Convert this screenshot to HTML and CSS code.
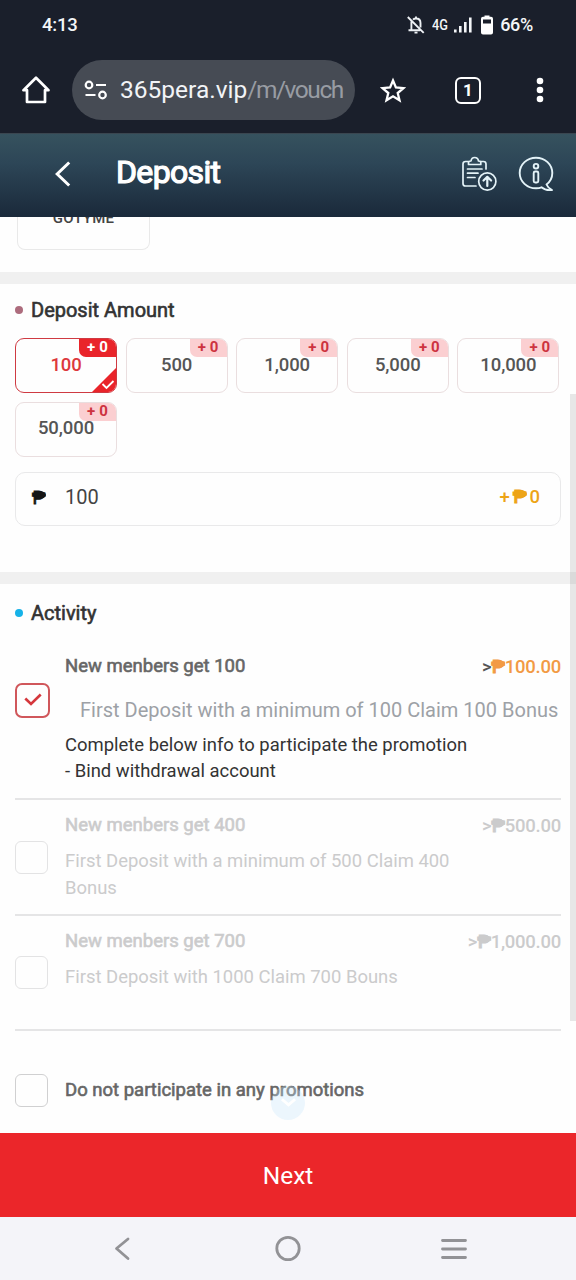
FILE: index.html
```html
<!DOCTYPE html>
<html lang="en">
<head>
<meta charset="utf-8">
<title>Deposit</title>
<link rel="stylesheet" href="styles.css">
</head>
<body>
<div class="phone">
  <div class="status">
    <span class="clock">4:13</span>
    <div class="status-right">
      <svg class="bell" viewBox="0 0 18 18" fill="none" stroke="#eef1f5" stroke-width="1.900"><path d="M4.400 5.500V13.500M1.500 14.200H13M6 3.600C6.800 2.800 7.700 2.500 9 2.500c2.800 0 4.500 1.900 4.500 4.500V11.500M9 .5V2.500M.8 1L16.700 16.900M7.500 16.600h3"/></svg>
      <span class="net">4G</span>
      <svg class="signal" viewBox="0 0 18 16" fill="#f4f6f8"><path d="M0 12.500h2.600V15.500H0zM5 9h2.600v6.500H5zM10 5h2.600v10.500H10zM15 .5h2.600v15H15z"/></svg>
      <svg class="battery" viewBox="0 0 12 20"><path d="M3.500 1.800V.5h5v1.300H10q2 0 2 2V17.500q0 2-2 2H2q-2 0-2-2V3.800q0-2 2-2z" fill="#fff"/><path d="M2 4.500h8v4H2z" fill="#1a1f2b"/></svg>
      <span class="pct">66%</span>
    </div>
  </div>
  <div class="browser">
    <svg class="home" viewBox="0 0 28 28" fill="none" stroke="#fff" stroke-width="2.700" stroke-linejoin="round"><path d="M1.500 14.200H5V26H23V14.200H26.500L14 1.800z"/></svg>
    <div class="url">
      <svg class="tune" viewBox="0 0 24 20" fill="none" stroke="#fff" stroke-width="2.200"><circle cx="5" cy="5" r="3.300"/><path d="M12 5h10M1.500 15h10"/><circle cx="18.500" cy="15" r="3.300"/></svg>
      <span class="address">365pera.vip<i>/m/vouch</i></span>
    </div>
    <svg class="star" viewBox="0 0 26 26" fill="none" stroke="#fff" stroke-width="2.300"><path d="M13 3.500l2.900 7 7.600.6-5.800 4.900 1.800 7.300L13 19.300 6.500 23.300l1.800-7.300-5.800-4.900 7.600-.6z"/></svg>
    <span class="tabs">1</span>
    <svg class="dots" viewBox="0 0 8 26" fill="#fff"><circle cx="4" cy="4" r="3.300"/><circle cx="4" cy="13" r="3.300"/><circle cx="4" cy="22" r="3.300"/></svg>
  </div>
  <header class="header">
    <svg class="back" viewBox="0 0 16 26" fill="none" stroke="#fff" stroke-width="3"><path d="M14.200 1.500L2.200 13 14.200 24.500"/></svg>
    <h1 class="page-title">Deposit</h1>
    <svg class="records" viewBox="0 0 36 36" fill="none" stroke="#e4f3f8" stroke-width="1.700" stroke-linecap="round" stroke-linejoin="round"><path d="M7.500 5.500H4.500Q2 5.500 2 8V27.500Q2 30 4.500 30H15M20 5.500H22.500Q25 5.500 25 8V13M7.500 8.500V6.500Q7.500 5 10 5Q10.500 1.500 13.700 1.500T17.500 5Q19.800 5 19.800 6.500V8.500zM6.500 13H21M6.500 17.200H17M6.500 21.500H14"/><circle cx="26.300" cy="25.500" r="8.600"/><path d="M26.300 30V21M22.500 24.500L26.300 20.800 30.100 24.500" stroke-width="2.200"/></svg>
    <svg class="info" viewBox="0 0 36 36" fill="none" stroke="#e4f3f8" stroke-width="1.900" stroke-linejoin="round"><path d="M28.500 28.500C32 25.800 34.300 21.500 34.300 17C34.300 8.500 27 1.700 18 1.700S1.700 8.500 1.700 17 9 32.300 18 32.300C20 32.300 22 32 23.500 31.300C26 33.500 30 34.500 34 34Q30 32 28.500 28.500z"/><circle cx="18" cy="10.200" r="2.300"/><rect x="15.700" y="15.500" width="4.600" height="11" rx="1.500"/></svg>
  </header>
  <main class="content">
    <section class="methods"><div class="method">GOTYME</div></section>
    <section class="amount">
      <h2 class="section-title plum">Deposit Amount</h2>
      <div class="chips">
        <div class="chip active">100<span class="bonus">+ 0</span><svg class="corner" viewBox="0 0 24 24"><path d="M24 0V24H0z" fill="#e9242a"/><path d="M10.500 16l4 4L21.500 13" fill="none" stroke="#fff" stroke-width="1.800"/></svg></div>
        <div class="chip">500<span class="bonus">+ 0</span></div>
        <div class="chip">1,000<span class="bonus">+ 0</span></div>
        <div class="chip">5,000<span class="bonus">+ 0</span></div>
        <div class="chip">10,000<span class="bonus">+ 0</span></div>
        <div class="chip low">50,000<span class="bonus">+ 0</span></div>
      </div>
      <div class="entry">
        <span class="peso dark">₱</span>
        <span class="value">100</span>
        <span class="gain"><span>+</span><span class="peso">₱</span><span>0</span></span>
      </div>
    </section>
    <section class="activity">
      <h2 class="section-title blue">Activity</h2>
      <div class="promo first">
        <span class="check on"><svg viewBox="0 0 18 14" fill="none" stroke="#d5373c" stroke-width="2.600"><path d="M1.300 5.500L7 11 16.700 1.500"/></svg></span>
        <div class="promo-body">
          <div class="promo-head"><h3>New menbers get 100</h3><span class="price"><b>&gt;</b><span class="peso">₱</span>100.00</span></div>
          <p class="offer">First Deposit with a minimum of 100 Claim 100 Bonus</p>
          <p class="terms">Complete below info to participate the promotion<br>- Bind withdrawal account</p>
        </div>
      </div>
      <div class="promo second disabled">
        <span class="check"></span>
        <div class="promo-body">
          <div class="promo-head"><h3>New menbers get 400</h3><span class="price"><b>&gt;</b><span class="peso">₱</span>500.00</span></div>
          <p class="desc">First Deposit with a minimum of 500 Claim 400<br>Bonus</p>
        </div>
      </div>
      <div class="promo third disabled">
        <span class="check"></span>
        <div class="promo-body">
          <div class="promo-head"><h3>New menbers get 700</h3><span class="price"><b>&gt;</b><span class="peso">₱</span>1,000.00</span></div>
          <p class="desc">First Deposit with 1000 Claim 700 Bouns</p>
        </div>
      </div>
      <div class="promo none">
        <span class="check"></span>
        <h3>Do not participate in any promotions</h3>
      </div>
    </section>
    <span class="scrollbar"></span>
    <span class="more"><svg viewBox="0 0 18 12" fill="none" stroke="#fff" stroke-width="3"><path d="M2 2l7 6 7-6"/></svg></span>
  </main>
  <button class="next">Next</button>
  <nav class="sysnav">
    <svg viewBox="0 0 28 28"><path d="M20 4L8.500 13.500 20 23.500"/></svg>
    <svg viewBox="0 0 28 28"><circle cx="14" cy="13.500" r="11.200"/></svg>
    <svg viewBox="0 0 28 28"><path d="M2.500 5.500H25.500M2.500 14H25.500M2.500 22.500H25.500"/></svg>
  </nav>
</div>
</body>
</html>
```
FILE: styles.css
```css
* { box-sizing: border-box; }
body { margin: 0; font-family: Roboto, "Liberation Sans", sans-serif; color: #38393b; }
h1, h2, h3, p { margin: 0; font-weight: 400; }
svg { display: block; flex: none; }
.phone { width: 576px; height: 1280px; display: flex; flex-direction: column; overflow: hidden; background: #fefefe; }

.status { height: 48px; flex: none; background: #1a1f2b; color: #f4f6f8; display: flex; align-items: center; justify-content: space-between; padding: 1px 43px 0 42px; font-weight: 500; font-size: 18px; }
.clock { font-size: 18.500px; letter-spacing: -.2px; }
.status-right { display: flex; align-items: center; }
.bell { width: 18px; height: 18px; }
.net { width: 17px; font-size: 15.500px; font-weight: 500; margin: 0 5px 0 7px; transform: scaleX(.82); transform-origin: left; }
.signal { width: 18px; height: 16px; }
.battery { width: 12px; height: 20px; margin: 0 7px 0 9px; }
.pct { letter-spacing: -.3px; }

.browser { height: 86px; flex: none; background: #1a1f2b; display: flex; align-items: center; padding: 0 32px 1px 22px; border-bottom: 1px solid #3a4650; }
.home { width: 28px; height: 28px; }
.url { width: 283px; height: 60px; margin: 0 25px 0 22px; border-radius: 30px; background: #464b54; display: flex; align-items: center; padding: 0 11px 0 12px; color: #f2f4f7; font-size: 24.500px; }
.tune { width: 24px; height: 20px; margin-right: 12px; }
.address { width: 224px; overflow: hidden; white-space: nowrap; line-height: 34px; }
.address i { font-style: normal; color: #989ca3; letter-spacing: -1.450px; }
.star { width: 26px; height: 26px; }
.tabs { width: 27px; height: 27px; margin: 0 55px 0 49px; border: 2.500px solid #fff; border-radius: 6px; color: #fff; font-weight: 700; font-size: 17px; line-height: 23px; text-align: center; }
.dots { width: 8px; height: 26px; }

.header { height: 83px; flex: none; display: flex; align-items: center; padding: 0 22px 4px 55px; background: linear-gradient(#36525e, #2d4657 35%, #1a293a); }
.back { width: 16px; height: 26px; }
.page-title { flex: 1; margin: -3px 0 0 45px; color: #fff; font-size: 32px; letter-spacing: -.65px; -webkit-text-stroke: 1.200px #fff; }
.records { width: 36px; height: 36px; }
.info { width: 36px; height: 36px; margin-left: 21px; }

.content { height: 916px; flex: none; position: relative; overflow: hidden; }
.methods { height: 67px; padding-left: 17px; border-bottom: 12px solid #f0f0f0; }
.method { width: 133px; height: 33px; border: 1px solid #e9e9e9; border-top: 0; border-radius: 0 0 8px 8px; text-align: center; line-height: 3px; font-size: 15px; font-weight: 500; color: #444; letter-spacing: .2px; }
.amount { height: 300px; padding: 14px 15px 0; border-bottom: 12px solid #f0f0f0; }
.section-title { display: flex; align-items: center; gap: 8px; height: 24px; font-size: 20px; color: #333; -webkit-text-stroke: .6px #333; }
.section-title::before { content: ""; width: 8px; height: 8px; border-radius: 50%; background: currentColor; }
.plum::before { background: #ad6c7d; }
.blue::before { background: #16b2e8; }
.chips { display: grid; grid-template-columns: repeat(5, 102px); column-gap: 8.600px; row-gap: 9px; margin-top: 16px; }
.chip { position: relative; height: 55px; border: 1px solid #eadedf; border-radius: 9px; text-align: center; line-height: 52px; font-size: 18.500px; font-weight: 500; color: #555; overflow: hidden; letter-spacing: -.1px; }
.chip.low { line-height: 50px; }
.bonus { position: absolute; top: 0; right: 0; width: 37px; height: 18px; border-radius: 0 0 0 7px; background: #fbcfd1; color: #cd3340; font-size: 15px; line-height: 17px; font-weight: 700; letter-spacing: .1px; }
.active { border-color: #cf3a42; color: #dd383c; }
.chip .bonus { z-index: 0; }
.active .bonus { background: #e9242a; color: #fff; }
.corner { position: absolute; right: 0; bottom: 0; width: 24px; height: 24px; }
.entry { height: 54px; margin-top: 15px; padding: 0 20px 4px 16px; border: 1px solid #e9e9ea; border-radius: 10px; display: flex; align-items: center; font-size: 20px; }
.peso { position: relative; -webkit-text-stroke: .8px currentColor; }
.peso::after { content: ""; position: absolute; left: 1px; top: 4px; width: 13px; height: 8px; border-radius: 50%; background: currentColor; }
.dark { width: 15px; font-size: 18px; color: #151515; }
.value { margin-left: 18px; flex: 1; color: #444; }
.gain { display: flex; gap: 3px; color: #eda416; font-size: 18.500px; font-weight: 500; }

.activity { padding: 17px 15px 0; }
.promo { display: flex; align-items: center; border-bottom: 2px solid #e5e5e6; }
.first { height: 159px; margin-top: 16px; }
.second { height: 116px; }
.third { height: 115px; }
.none { height: 118px; border: 0; }
.check { flex: none; width: 33px; height: 33px; border: 1px solid #d0d0d1; border-radius: 6px; margin-right: 17px; }
.disabled .check { border-color: #e3e3e4; }
.check.on { width: 35px; height: 35px; margin: -39px 15px 0 0; border: 2px solid #d0575b; display: flex; align-items: center; justify-content: center; border-radius: 7px; }
.check svg { width: 18px; height: 14px; }
.promo-body { flex: 1; height: 100%; }
.promo-head { display: flex; justify-content: space-between; height: 24px; align-items: center; }
.promo h3 { font-size: 18.500px; line-height: 24px; color: #666; -webkit-text-stroke: .6px currentColor; }
.price { display: flex; margin-top: 2px; color: #f29a44; font-size: 18.500px; font-weight: 500; letter-spacing: -.25px; }
.price b { color: #555; font-weight: 500; }
.first .promo-head { margin-top: 13px; }
.offer { margin: 19px 0 0 15px; font-size: 20px; line-height: 26px; color: #9da1a6; white-space: nowrap; }
.terms { margin-top: 10px; font-size: 18.450px; line-height: 25.500px; color: #333; white-space: nowrap; }
.second .promo-head, .third .promo-head { margin-top: 13px; }
.desc { margin-top: 11px; font-size: 18.450px; line-height: 27px; white-space: nowrap; }
.promo.disabled h3, .disabled, .disabled .price, .disabled b { color: #cbcbcc; }
.scrollbar { position: absolute; right: 0; top: 177px; width: 6px; height: 627px; background: rgba(0, 0, 0, .09); }
.more { position: absolute; left: 271px; top: 869px; width: 34px; height: 34px; border-radius: 50%; background: rgba(200, 230, 252, .33); display: flex; align-items: center; justify-content: center; }
.more svg { width: 17px; height: 12px; }
.next { height: 84px; flex: none; border: 0; background: #eb262a; color: #fff; font-family: inherit; font-size: 24.500px; padding: 0; }
.sysnav { height: 63px; background: #f4f4f9; display: flex; align-items: center; justify-content: space-between; padding: 0 108px; }
.sysnav svg { width: 28px; height: 28px; fill: none; stroke: #929296; stroke-width: 2.800; stroke-linecap: round; stroke-linejoin: round; }
```
